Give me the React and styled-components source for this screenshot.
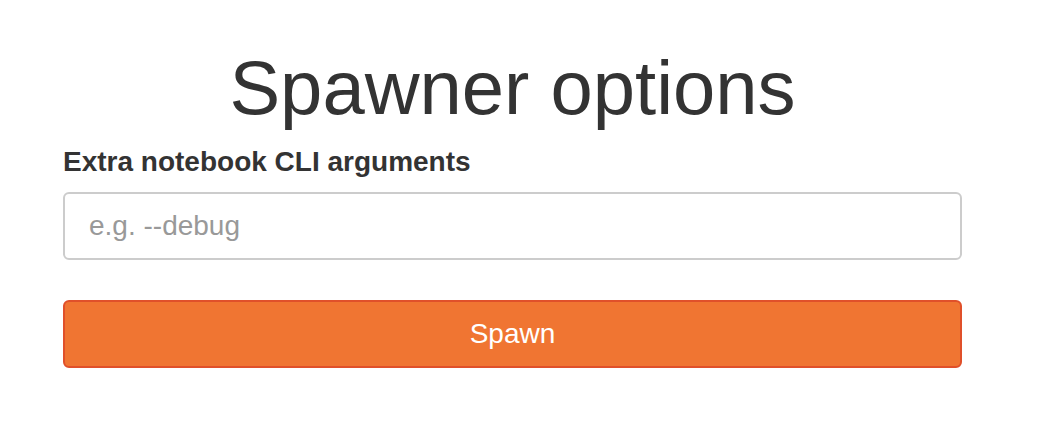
import styled, { createGlobalStyle } from "styled-components";

const GlobalStyle = createGlobalStyle`
  html, body {
    margin: 0;
    padding: 0;
    background: #fff;
  }
  body {
    font-family: "Liberation Sans", Arial, Helvetica, sans-serif;
    color: #333;
  }
`;

const Page = styled.div`
  width: 1038px;
  height: 436px;
  padding: 0 76px 0 63px;
  box-sizing: border-box;
`;

const Form = styled.form`
  display: flex;
  flex-direction: column;
  width: 899px;
`;

const Title = styled.h1`
  margin: 46px 0 0;
  font-size: 76px;
  font-weight: 500;
  line-height: 1.1;
  text-align: center;
  color: #333;
`;

const Label = styled.label`
  margin-top: 12px;
  font-size: 28px;
  font-weight: bold;
  line-height: 40px;
`;

const Input = styled.input`
  margin-top: 10px;
  height: 68px;
  box-sizing: border-box;
  padding: 12px 24px;
  font-family: inherit;
  font-size: 28px;
  color: #555;
  border: 2px solid #ccc;
  border-radius: 6px;
  outline: none;

  &::placeholder {
    color: #999;
  }
`;

const SpawnButton = styled.button`
  margin-top: 40px;
  height: 68px;
  font-family: inherit;
  font-size: 28px;
  color: #fff;
  background: #f07532;
  border: 2px solid #e0502a;
  border-radius: 6px;
  cursor: pointer;
`;

export default function App() {
  return (
    <Page>
      <GlobalStyle />
      <Form onSubmit={(e) => e.preventDefault()}>
        <Title>Spawner options</Title>
        <Label htmlFor="args">Extra notebook CLI arguments</Label>
        <Input id="args" type="text" placeholder="e.g. --debug" />
        <SpawnButton type="submit">Spawn</SpawnButton>
      </Form>
    </Page>
  );
}
